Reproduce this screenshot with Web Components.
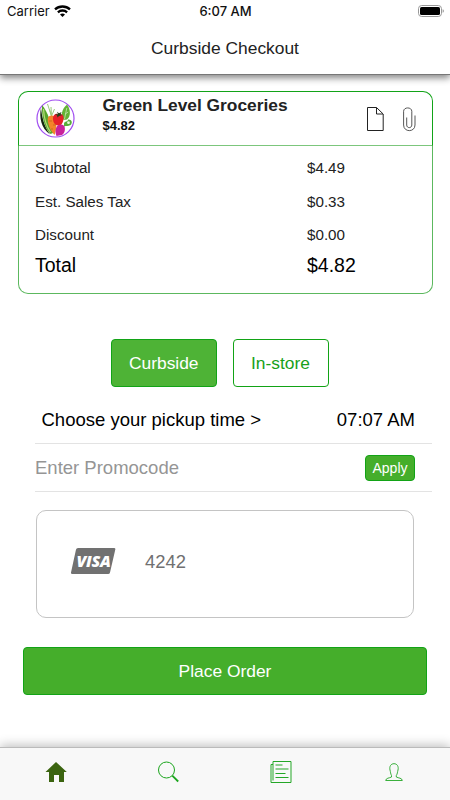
<!DOCTYPE html>
<html lang="en">
<head>
<meta charset="utf-8">
<meta name="viewport" content="width=device-width, initial-scale=1">
<title>Curbside Checkout</title>
<style>
  body {
    margin: 0;
    background: #fff;
    color: #111;
    font-family: "Liberation Sans", Arial, sans-serif;
  }
</style>
</head>
<body>
<checkout-screen></checkout-screen>

<script>
  class StatusBar extends HTMLElement {
    constructor() {
      super();
      this.attachShadow({ mode: 'open' });
    }

    connectedCallback() {
      this.shadowRoot.innerHTML = `
        <style>
          :host {
            display: grid;
            grid-template-columns: 1fr auto 1fr;
            align-items: center;
            height: 22px;
            padding: 0 6px 0 7px;
            font-family: Inter, sans-serif;
            font-size: 13px;
            color: #111;
          }

          .left {
            display: flex;
            align-items: center;
            gap: 4px;
          }

          .time {
            font-weight: 500;
          }

          .battery {
            justify-self: end;
          }

          svg {
            display: block;
          }
        </style>
        <div class="left">
          <span>Carrier</span>
          <svg width="17" height="12" viewBox="0 0 17 12" fill="none" stroke="#000" stroke-width="2.3">
            <path d="M1 4.4C5.2.5 11.8.5 16 4.4"/>
            <path d="M3.9 7.3C6.5 4.9 10.5 4.9 13.1 7.3"/>
            <path d="M8.5 11.9L6 9.4C7.4 8.1 9.6 8.1 11 9.4Z" fill="#000" stroke="none"/>
          </svg>
        </div>
        <span class="time"><slot></slot></span>
        <svg class="battery" width="26" height="12" viewBox="0 0 26 12">
          <rect x=".5" y=".5" width="23" height="11" rx="3.2" fill="none" stroke="#999"/>
          <rect x="2" y="2" width="20" height="8" rx="1.6" fill="#000"/>
          <path d="M24.7 4.2c1.4.6 1.4 3 0 3.6z" fill="#888"/>
        </svg>
      `;
    }
  }

  class NavHeader extends HTMLElement {
    constructor() {
      super();
      this.attachShadow({ mode: 'open' });
    }

    connectedCallback() {
      this.shadowRoot.innerHTML = `
        <style>
          :host {
            display: block;
            box-sizing: border-box;
            height: 75px;
            flex-shrink: 0;
            background: #fff;
            border-bottom: 1px solid #777;
            box-shadow: 0 3px 7px rgba(0, 0, 0, 0.48);
          }

          h1 {
            margin: 0;
            height: 53px;
            line-height: 53px;
            text-align: center;
            font-size: 17.4px;
            font-weight: 400;
            color: #222;
          }
        </style>
        <status-bar>6:07 AM</status-bar>
        <h1><slot></slot></h1>
      `;
    }
  }

  class StoreLogo extends HTMLElement {
    constructor() {
      super();
      this.attachShadow({ mode: 'open' });
    }

    connectedCallback() {
      this.shadowRoot.innerHTML = `
        <style>
          :host {
            display: block;
            width: 39px;
            height: 39px;
          }

          svg {
            display: block;
          }
        </style>
        <svg width="39" height="39" viewBox="0 0 39 39">
          <circle cx="19.5" cy="19.5" r="18.5" fill="#fff" stroke="#a04df0" stroke-width="1.2"/>
          <path d="M5 9C3 18 5 29 14 35.500C8 27 6 18 5 9Z" fill="#152510"/>
          <path d="M6 6C5.500 18 8.500 29 14.500 35L17 34C15 24 12 13 6 6Z" fill="#58a62c"/>
          <path d="M7.500 10C8 19 10 27 14.500 33" stroke="#b7dc7c" stroke-width="1.200" fill="none"/>
          <path d="M15.500 17L13.500 10.500M15.500 17L11.500 5M15.500 17L15 8M15.500 17L18.500 10" stroke="#9acb7d" fill="none"/>
          <path d="M11.800 19C13.500 15.500 18.500 16 20 19.500C21 24 20.300 31 18.500 36C14.500 32 11 24 11.800 19Z" fill="#f3842a"/>
          <path d="M13 22h3M17 26h2.500M15 30h2" stroke="#bf5b18" stroke-width=".7"/>
          <path d="M25.500 19C25.500 14 26.500 9 31 5.500C34.500 10 35 17 31.500 20C29.500 21.500 27 21 25.500 19Z" fill="#64b335"/>
          <path d="M28.500 20L30.800 9M29.200 15l3-2" stroke="#d5ebc2" stroke-width=".7"/>
          <path d="M28 24.500C29 21.500 31.500 23.500 32 20.500C36.500 20 36.500 24.500 34.500 26C32.300 27.600 30 26.500 28 27.500Z" fill="#57ae39"/>
          <circle cx="32.500" cy="23.700" r="1.400" fill="#eaf6df"/>
          <path d="M17 20C16.800 15 21 13.500 22.800 15.500C26 13.800 28.500 17 27.300 21.500C26.300 26 23.500 27.500 21 26.300C18.500 25.500 17 23 17 20Z" fill="#e62129"/>
          <path d="M19 15l3 .500L21 12.700l2 1.500L25.500 13l-1 2.500 2 .500-3.500 1-1.500 1.500-.500-2Z" fill="#23411b"/>
          <path d="M20.500 28C22 24.800 27.500 24.700 28.500 27.500C29.500 31 28.500 34.500 26 36L20.500 37C19.300 34 19 31 20.500 28Z" fill="#c9219b"/>
        </svg>
      `;
    }
  }

  class PriceRow extends HTMLElement {
    constructor() {
      super();
      this.attachShadow({ mode: 'open' });
    }

    connectedCallback() {
      this.shadowRoot.innerHTML = `
        <style>
          :host {
            display: grid;
            grid-template-columns: 272px 1fr;
            height: 33.5px;
            line-height: 33.5px;
            font-size: 15.2px;
            color: #222;
          }

          :host([total]) {
            height: 27px;
            line-height: 27px;
            font-size: 19.5px;
            color: #000;
          }
        </style>
        <span>${this.getAttribute('label')}</span>
        <span><slot></slot></span>
      `;
    }
  }

  class OrderCard extends HTMLElement {
    constructor() {
      super();
      this.attachShadow({ mode: 'open' });
    }

    connectedCallback() {
      this.shadowRoot.innerHTML = `
        <style>
          :host {
            display: flex;
            flex-direction: column;
            height: 203.5px;
            margin: 15.5px 17.5px 0;
          }

          header {
            display: flex;
            box-sizing: border-box;
            height: 55px;
            padding: 7px 16px 0 17px;
            border: 1.5px solid #12a318;
            border-bottom: 1px solid #7cc67c;
            border-radius: 10px 10px 0 0;
          }

          .name {
            flex: 1;
            padding-left: 28px;
            font-weight: 700;
            color: #222;
          }

          h2 {
            margin: -4px 0 0;
            font-size: 17.35px;
            line-height: 21px;
          }

          .name div {
            padding-top: 1px;
            font-size: 13px;
            line-height: 18px;
            color: #111;
          }

          .tools {
            display: flex;
            gap: 19px;
            padding-top: 8px;
          }

          .rows {
            flex: 1;
            padding: 5.5px 0 0 16.5px;
            border: 1px solid #5cb85e;
            border-top: 0;
            border-radius: 0 0 10px 10px;
          }

          svg {
            display: block;
          }
        </style>
        <header>
          <store-logo></store-logo>
          <div class="name">
            <h2>${this.getAttribute('store')}</h2>
            <div>${this.getAttribute('price')}</div>
          </div>
          <div class="tools">
            <svg width="17" height="25" viewBox="0 0 17 25" fill="none" stroke="#222">
              <path d="M.5 .500H9.500L16.200 7V23.500H.5ZM9.500 .500V7H16"/>
            </svg>
            <svg width="13" height="25" viewBox="0 0 13 25" fill="none" stroke="#444" stroke-width=".9">
              <path d="M3.700 10.500V18C3.700 21.500 8.800 21.500 8.800 18V4.300C8.800 -.2 .6 -.2 .6 4.300V18C.6 25.500 12 25.500 12 18V8.500"/>
            </svg>
          </div>
        </header>
        <div class="rows"><slot></slot></div>
      `;
    }
  }

  class GreenButton extends HTMLElement {
    constructor() {
      super();
      this.attachShadow({ mode: 'open' });
    }

    connectedCallback() {
      this.shadowRoot.innerHTML = `
        <style>
          :host {
            display: block;
            height: 48.5px;
            font-size: 17.4px;
          }

          button {
            display: block;
            width: 100%;
            height: 100%;
            box-sizing: border-box;
            padding: 2px 0 0;
            border: 1px solid #12a316;
            border-radius: 4px;
            background: var(--fill, #45ae2b);
            color: #fff;
            font: inherit;
            cursor: pointer;
          }

          :host([outline]) button {
            background: #fff;
            color: #17a01a;
          }

          :host([small]) {
            width: 50px;
            height: 26px;
            font-size: 14px;
          }

          :host([small]) button {
            padding: 0;
          }
        </style>
        <button><slot></slot></button>
      `;
    }
  }

  class FormRow extends HTMLElement {
    constructor() {
      super();
      this.attachShadow({ mode: 'open' });
    }

    connectedCallback() {
      this.shadowRoot.innerHTML = `
        <style>
          :host {
            display: flex;
            align-items: center;
            justify-content: space-between;
            box-sizing: border-box;
            height: 48px;
            margin: 0 18px 0 35px;
            padding-right: 17px;
            border-bottom: 1px solid #e3e3e3;
            font-size: 18.5px;
            color: #000;
          }
        </style>
        <slot></slot>
      `;
    }
  }

  class PaymentCard extends HTMLElement {
    constructor() {
      super();
      this.attachShadow({ mode: 'open' });
    }

    connectedCallback() {
      this.shadowRoot.innerHTML = `
        <style>
          :host {
            display: flex;
            box-sizing: border-box;
            height: 108px;
            margin: 18px 36px 0;
            padding: 37px 34px 0;
            border: 1px solid #c4c4c4;
            border-radius: 10px;
            font-size: 18.4px;
            line-height: 28px;
            color: #707070;
          }

          .visa {
            position: relative;
            width: 45px;
            height: 26px;
            margin-right: 29px;
            line-height: 26px;
          }

          svg {
            display: block;
          }

          .visa span {
            position: absolute;
            inset: 0;
            text-align: center;
            font-family: "Open Sans", sans-serif;
            font-size: 16px;
            font-weight: 800;
            font-style: italic;
            letter-spacing: -0.3px;
            color: #fff;
          }
        </style>
        <div class="visa">
          <svg width="45" height="26" viewBox="0 0 45 26">
            <path d="M7 0H43Q44.700 0 44.300 1.500L39 24.500Q38.700 26 37 26H1.200Q-.3 26 0 24.500L5 1.500Q5.400 0 7 0Z" fill="#717171"/>
          </svg>
          <span>VISA</span>
        </div>
        <slot></slot>
      `;
    }
  }

  class TabBar extends HTMLElement {
    constructor() {
      super();
      this.attachShadow({ mode: 'open' });
    }

    connectedCallback() {
      this.shadowRoot.innerHTML = `
        <style>
          :host {
            display: grid;
            grid-template-columns: repeat(4, 1fr);
            justify-items: center;
            box-sizing: border-box;
            height: 53px;
            margin-top: auto;
            padding-top: 12px;
            border-top: 1px solid #bbb;
            background: #f8f8f8;
            box-shadow: 0 -2px 10px rgba(0, 0, 0, 0.25);
          }

          svg {
            display: block;
          }
        </style>
        <svg width="24" height="24" viewBox="0 0 24 24">
          <path d="M12 2L22.800 12H20V22H15V15H10V22H5V12H1.500Z" fill="#3b6410"/>
        </svg>
        <svg width="24" height="24" viewBox="0 0 24 24" fill="none" stroke="#1ba51d">
          <circle cx="9.500" cy="10" r="8"/>
          <path d="M15.300 15.700L21.200 21.500" stroke-width="1.800"/>
        </svg>
        <svg width="24" height="24" viewBox="0 0 24 24" fill="none" stroke="#24a727">
          <path d="M4 1.500H22V22.500H2V4.500H4M4 1.500V20.500"/>
          <path d="M6.500 5h7M6.500 9h13M6.500 13.500h10M6.500 17.500h13"/>
        </svg>
        <svg width="24" height="24" viewBox="0 0 24 24" fill="none" stroke="#24a727" stroke-width=".9">
          <path d="M9.500 15.500C8.500 13.800 8.600 12 8 10C7.200 6.500 8.800 3.700 12 3.700C15.200 3.700 16.800 6.500 16 10C15.400 12 15.500 13.800 14.300 15.500V17C16.500 18.200 20 17.800 20.300 20.500H3.700C4 17.800 7.300 18.200 9.500 17Z"/>
        </svg>
      `;
    }
  }

  class CheckoutScreen extends HTMLElement {
    constructor() {
      super();
      this.attachShadow({ mode: 'open' });
    }

    connectedCallback() {
      this.shadowRoot.innerHTML = `
        <style>
          :host {
            display: flex;
            flex-direction: column;
            height: 800px;
            overflow: hidden;
          }

          .methods {
            display: grid;
            grid-template-columns: 106.5px 96px;
            gap: 15.5px;
            margin: 44.5px 0 0 110.5px;
          }

          .pickup {
            height: 57px;
            padding: 0 17px 0 6.5px;
          }

          .promo {
            padding-top: 1px;
            color: #959595;
          }

          .place {
            margin: 28.5px 23px 0;
          }
        </style>
        <nav-header>Curbside Checkout</nav-header>
        <order-card store="Green Level Groceries" price="$4.82">
          <price-row label="Subtotal">$4.49</price-row>
          <price-row label="Est. Sales Tax">$0.33</price-row>
          <price-row label="Discount">$0.00</price-row>
          <price-row label="Total" total>$4.82</price-row>
        </order-card>
        <div class="methods">
          <green-button style="--fill: #4eb336">Curbside</green-button>
          <green-button outline>In-store</green-button>
        </div>
        <form-row class="pickup">
          <span style="padding-top: 10px">Choose your pickup time &gt;</span>
          <span style="padding-top: 9px">07:07 AM</span>
        </form-row>
        <form-row>
          <span class="promo">Enter Promocode</span>
          <green-button small>Apply</green-button>
        </form-row>
        <payment-card>4242</payment-card>
        <green-button class="place">Place Order</green-button>
        <tab-bar></tab-bar>
      `;
    }
  }

  customElements.define('status-bar', StatusBar);
  customElements.define('nav-header', NavHeader);
  customElements.define('store-logo', StoreLogo);
  customElements.define('price-row', PriceRow);
  customElements.define('order-card', OrderCard);
  customElements.define('green-button', GreenButton);
  customElements.define('form-row', FormRow);
  customElements.define('payment-card', PaymentCard);
  customElements.define('tab-bar', TabBar);
  customElements.define('checkout-screen', CheckoutScreen);
</script>
</body>
</html>
